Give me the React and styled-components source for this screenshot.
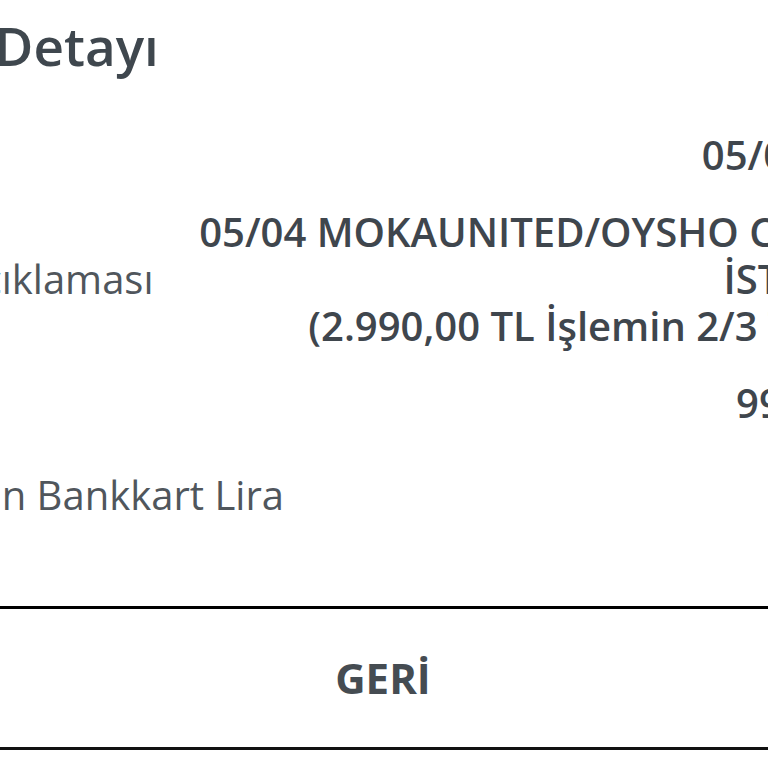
import styled, { createGlobalStyle } from "styled-components";

const GlobalStyle = createGlobalStyle`
    * {
        box-sizing: border-box;
    }
    html, body {
        margin: 0;
        padding: 0;
        background: #fff;
        overflow: hidden;
    }
    body {
        font-family: "Open Sans", "Noto Sans", sans-serif;
        color: #3f464d;
    }
`;

const details = [
    { label: "Tarih", value: "05/04/2024" },
    {
        label: "İşlem Açıklaması",
        value: "05/04 MOKAUNITED/OYSHO CEVAHİR\nİSTANBUL\n(2.990,00 TL İşlemin 2/3 Taksidi)",
    },
    { label: "Tutar", value: "996,67 TL" },
    { label: "Kazanılan Bankkart Lira", value: "0,00 TL", spaced: true },
];

export default function App() {
    return (
        <>
            <GlobalStyle />
            <Viewport>
                <Screen>
                    <Header>
                        <Title>İşlem Detayı</Title>
                    </Header>
                    <DetailList>
                        {details.map((item, index) => (
                            <DetailRow key={index} spaced={item.spaced ? 1 : 0}>
                                <Label>{item.label}</Label>
                                <Value>{item.value}</Value>
                            </DetailRow>
                        ))}
                    </DetailList>
                    <BackButton type="button">GERİ</BackButton>
                </Screen>
            </Viewport>
        </>
    );
}

const Viewport = styled.div`
    width: 768px;
    height: 768px;
    overflow: hidden;
    background: #fff;
`;

const Screen = styled.div`
    width: 1110px;
    margin-left: -172px;
    display: flex;
    flex-direction: column;
`;

const Header = styled.div`
    padding: 16px 24px 2px 15px;
`;

const Title = styled.h1`
    margin: 0;
    font-size: 53px;
    line-height: 60px;
    font-weight: 600;
    color: #3f474e;
    white-space: nowrap;
`;

const DetailList = styled.div`
    display: flex;
    flex-direction: column;
    gap: 30px;
    padding: 53px 22px 0 19px;
`;

const DetailRow = styled.div`
    display: flex;
    align-items: center;
    justify-content: space-between;
    gap: 24px;
    margin-top: ${(props) => (props.spaced ? "15px" : "0")};
`;

const Label = styled.div`
    flex-shrink: 0;
    font-size: 40px;
    line-height: 47px;
    font-weight: 400;
    color: #50565c;
    white-space: nowrap;
`;

const Value = styled.div`
    font-size: 40px;
    line-height: 47px;
    font-weight: 600;
    color: #3f464d;
    text-align: right;
    white-space: pre-line;
`;

const BackButton = styled.button`
    margin-top: 88px;
    width: 100%;
    height: 144px;
    background: #fff;
    border: none;
    border-top: 3px solid #000;
    border-bottom: 3px solid #111;
    font-family: "Open Sans", "Noto Sans", sans-serif;
    font-size: 42px;
    line-height: 42px;
    font-weight: 700;
    color: #454c52;
    cursor: pointer;
`;
